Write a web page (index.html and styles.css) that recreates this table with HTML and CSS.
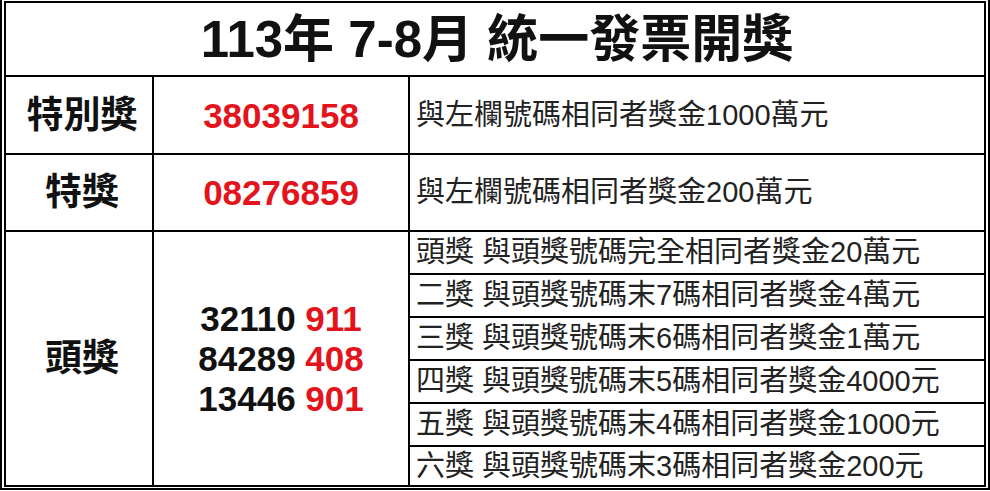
FILE: index.html
```html
<!DOCTYPE html>
<html lang="zh-Hant">
<head>
<meta charset="utf-8">
<title>113年 7-8月 統一發票開獎</title>
<link rel="stylesheet" href="styles.css">
</head>
<body>
<div class="frame">
  <table class="prize">
    <colgroup><col class="c1"><col class="c2"><col class="c3"></colgroup>
    <tr class="r-title"><th colspan="3" class="title">113年 7-8月 統一發票開獎</th></tr>
    <tr class="r-1"><th class="label">特別獎</th><td class="num">38039158</td><td class="desc">與左欄號碼相同者獎金1000萬元</td></tr>
    <tr class="r-2"><th class="label">特獎</th><td class="num">08276859</td><td class="desc">與左欄號碼相同者獎金200萬元</td></tr>
    <tr class="r-sub">
      <th class="label" rowspan="6">頭獎</th>
      <td class="nums" rowspan="6">
        <div class="line">32110 <span class="red">911</span></div>
        <div class="line">84289 <span class="red">408</span></div>
        <div class="line">13446 <span class="red">901</span></div>
      </td>
      <td class="desc">頭獎 與頭獎號碼完全相同者獎金20萬元</td>
    </tr>
    <tr class="r-sub"><td class="desc">二獎 與頭獎號碼末7碼相同者獎金4萬元</td></tr>
    <tr class="r-sub"><td class="desc">三獎 與頭獎號碼末6碼相同者獎金1萬元</td></tr>
    <tr class="r-sub"><td class="desc">四獎 與頭獎號碼末5碼相同者獎金4000元</td></tr>
    <tr class="r-sub"><td class="desc">五獎 與頭獎號碼末4碼相同者獎金1000元</td></tr>
    <tr class="r-last"><td class="desc">六獎 與頭獎號碼末3碼相同者獎金200元</td></tr>
  </table>
</div>
</body>
</html>
```
FILE: styles.css
```css
html, body {
  margin: 0;
  padding: 0;
  background: #fff;
}

.frame {
  box-sizing: border-box;
  width: 990px;
  height: 490px;
  border: 2px solid #000;
  border-top: none;
  padding: 1px 2px 2px 2px;
}

.prize {
  border-collapse: collapse;
  table-layout: fixed;
  width: 982px;
  font-family: "Liberation Sans", "Noto Sans CJK TC", sans-serif;
  color: #111;
}

.c1 { width: 148px; }
.c2 { width: 256px; }
.c3 { width: 576px; }

.prize th,
.prize td {
  border: 2px solid #000;
  padding: 0;
  vertical-align: middle;
}

.r-title { height: 74px; }
.r-1 { height: 78px; }
.r-2 { height: 77px; }
.r-sub { height: 43px; }
.r-last { height: 40px; }

.prize .title {
  font-size: 51px;
  font-weight: bold;
  text-align: center;
  line-height: 1;
  padding-left: 4px;
}

.prize .label {
  font-size: 37px;
  font-weight: bold;
  text-align: center;
  line-height: 1;
  padding-left: 6px;
}

.prize .num {
  font-size: 35px;
  font-weight: bold;
  text-align: center;
  color: #e3141c;
  line-height: 1;
}

.prize .nums {
  font-size: 35px;
  font-weight: bold;
  text-align: center;
  color: #111;
}

.line {
  line-height: 40px;
}

.red {
  color: #e3141c;
}

.prize .desc {
  font-size: 29px;
  font-weight: normal;
  text-align: left;
  padding-left: 6px;
  color: #222;
  line-height: 1;
  white-space: nowrap;
}
```
